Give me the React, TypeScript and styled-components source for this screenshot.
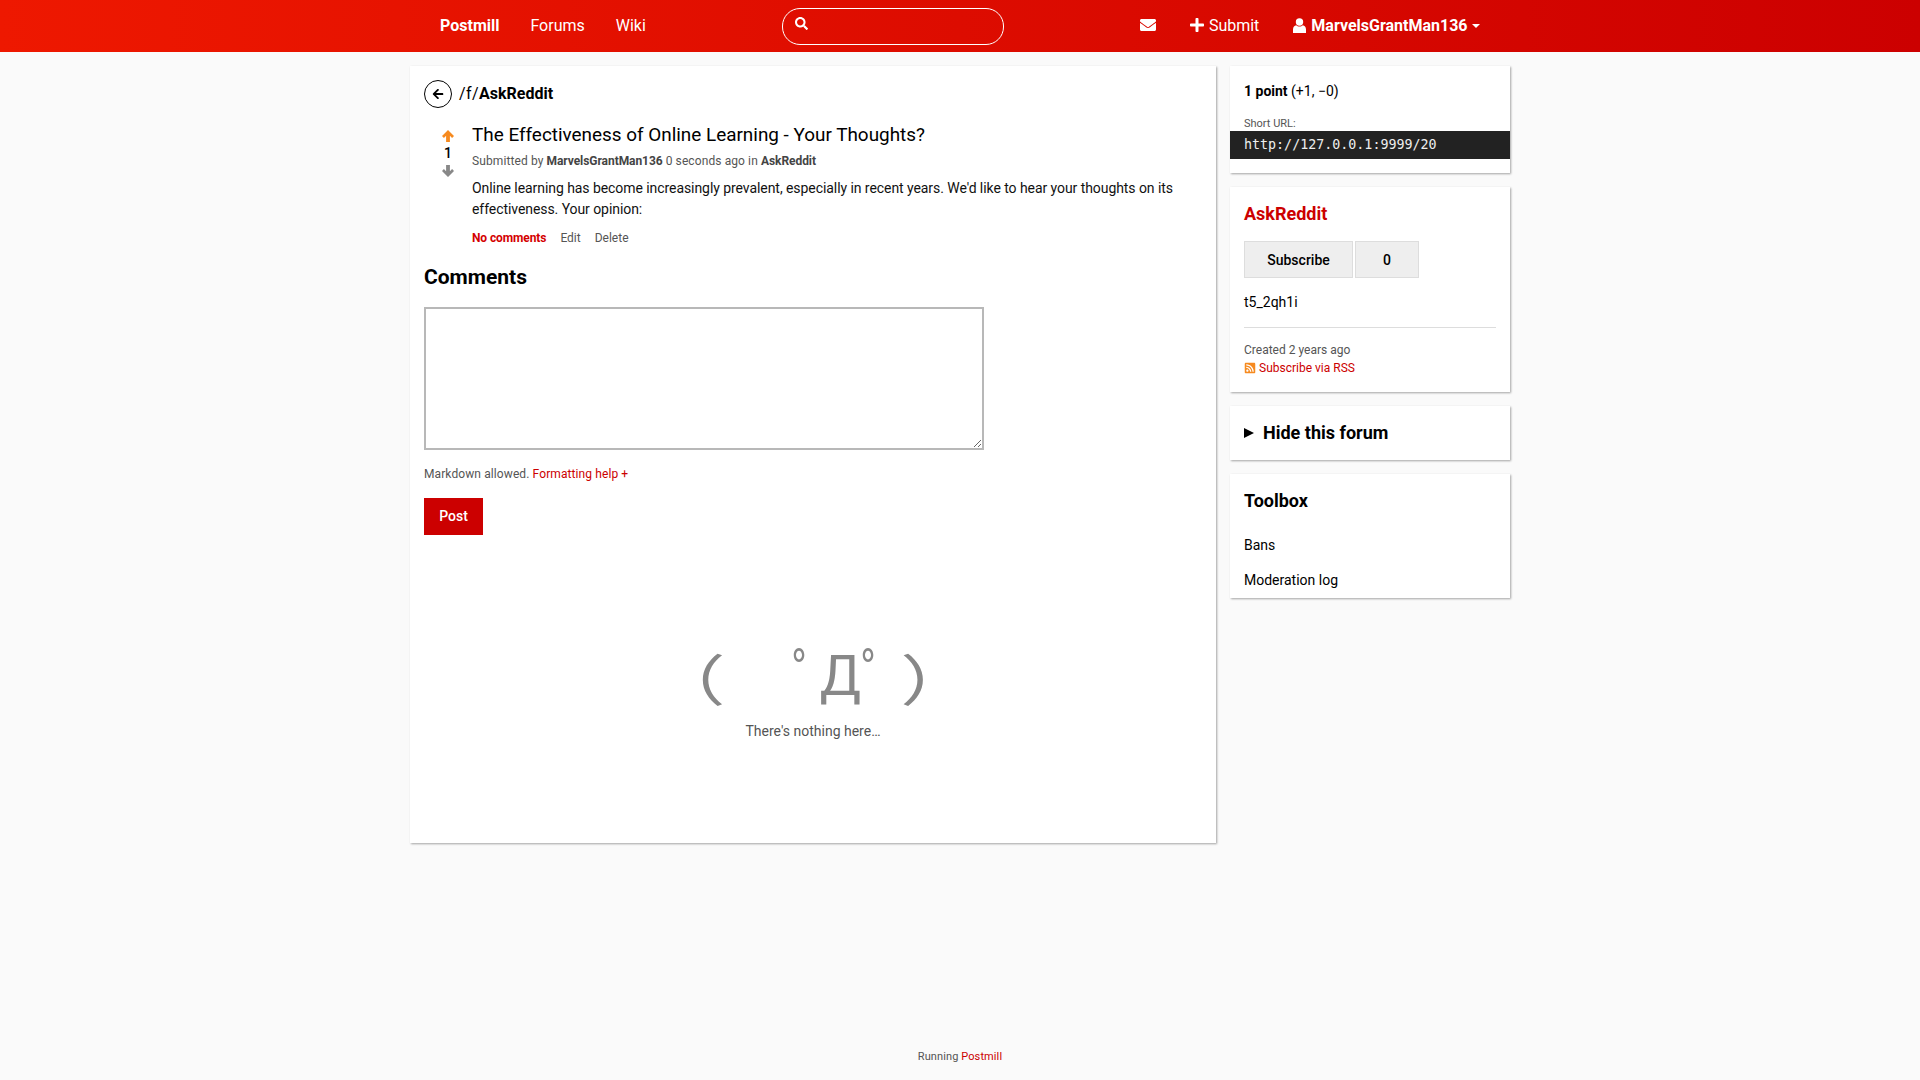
import React from "react";
import styled, { createGlobalStyle } from "styled-components";
import { FaEnvelope, FaPlus, FaSearch, FaRssSquare, FaArrowLeft } from "react-icons/fa";

const Global = createGlobalStyle`
  html, body { margin: 0; padding: 0; background: #fafafa; }
  body { font-family: Roboto, "Liberation Sans", sans-serif; font-size: 14px; color: #000; }
  * { box-sizing: border-box; }
`;

const Page = styled.div`
  min-height: 1080px;
  display: flex;
  flex-direction: column;
`;
const Nav = styled.nav`
  height: 52px;
  background: linear-gradient(to right, #ee1800, #cc0000);
  color: #fff;
  display: flex;
  justify-content: center;
`;
const NavInner = styled.div`
  width: 1100px;
  display: flex;
  align-items: center;
  padding-left: 30px;
  font-size: 16px;
`;
const NavLink = styled.span<{ $bold?: boolean; $gap: number }>`
  font-weight: ${(p) => (p.$bold ? 700 : 400)};
  margin-right: ${(p) => p.$gap}px;
  display: inline-flex;
  align-items: center;
  gap: 4px;
  margin-top: -2px;
`;
const SearchBox = styled.div`
  width: 222px;
  height: 37px;
  border: 1px solid #fff;
  border-radius: 18px;
  padding: 8px 12px;
  margin-right: 136px;
  margin-top: 1px;
  display: flex;
  align-items: flex-start;
  font-size: 13px;
`;
const Caret = styled.span`
  width: 0;
  height: 0;
  border-left: 4px solid transparent;
  border-right: 4px solid transparent;
  border-top: 4px solid #fff;
  margin-top: 2px;
`;
const UserIcon = styled.svg`
  width: 13px;
  height: 15px;
  display: block;
  fill: #fff;
  margin-right: 1px;
`;
const Layout = styled.div`
  width: 1100px;
  margin: 14px auto 0;
  display: flex;
  align-items: flex-start;
  gap: 14px;
`;
const Card = styled.section`
  background: #fff;
  box-shadow: 1px 1px 2px rgba(0, 0, 0, 0.35);
`;
const Main = styled(Card)`
  width: 806px;
  height: 777px;
  padding: 14px;
  display: flex;
  flex-direction: column;
`;
const Breadcrumb = styled.div`
  display: flex;
  align-items: center;
  gap: 7px;
  font-size: 16px;
  height: 28px;
  line-height: 26px;
`;
const Prefix = styled.span`
  letter-spacing: 0.4px;
`;
const BackCircle = styled.span`
  width: 28px;
  height: 28px;
  border: 1px solid #000;
  border-radius: 50%;
  display: inline-flex;
  align-items: center;
  justify-content: center;
  font-size: 12px;
`;
const Bold = styled.b`
  font-weight: 700;
`;
const Post = styled.article`
  display: flex;
  margin-top: 14px;
  padding-left: 17px;
`;
const Votes = styled.div`
  width: 14px;
  margin-right: 17px;
  margin-top: 8px;
  display: flex;
  flex-direction: column;
  align-items: center;
  font-size: 14px;
  line-height: 23px;
  font-weight: 500;
`;
const VoteIcon = styled.svg<{ $color: string; $flip?: boolean }>`
  width: 12px;
  height: 12px;
  display: block;
  fill: ${(p) => p.$color};
  transform: ${(p) => (p.$flip ? "scaleY(-1)" : "none")};
`;
const PostBody = styled.div`
  flex: 1;
`;
const Title = styled.h1`
  font-size: 18.9px;
  font-weight: 400;
  line-height: 26px;
  margin: 0;
`;
const Meta = styled.div`
  font-size: 12px;
  line-height: 18px;
  letter-spacing: 0.1px;
  color: #555;
  margin-top: 4px;
`;
const MetaStrong = styled.b`
  font-weight: 700;
  letter-spacing: -0.06px;
  color: #444;
`;
const BodyText = styled.p`
  font-size: 14px;
  letter-spacing: -0.065px;
  line-height: 21px;
  margin: 8px 0 0;
  width: 710px;
  color: #111;
`;
const Actions = styled.div`
  display: flex;
  gap: 14px;
  font-size: 12px;
  line-height: 18px;
  color: #555;
  margin-top: 9px;
`;
const RedBold = styled.span`
  color: #d40000;
  font-weight: 700;
  letter-spacing: -0.1px;
`;
const Heading = styled.h2`
  font-size: 21px;
  font-weight: 700;
  line-height: 28px;
  margin: 16px 0 0;
`;
const Area = styled.textarea`
  display: block;
  width: 560px;
  height: 143px;
  margin-top: 16px;
  border: 2px solid #b8b8b8;
  background: #fff;
  outline: none;
`;
const Hint = styled.div`
  font-size: 12px;
  line-height: 18px;
  letter-spacing: 0.1px;
  color: #555;
  margin-top: 15px;
`;
const Red = styled.span`
  color: #cc0000;
`;
const PostButton = styled.button`
  width: 59px;
  height: 37px;
  margin-top: 15px;
  padding: 0 0 2px;
  border: 0;
  background: #cc0000;
  color: #fff;
  font: 500 14px Roboto, sans-serif;
`;
const Empty = styled.div`
  margin-top: 109px;
  display: flex;
  flex-direction: column;
  align-items: center;
`;
const Kaomoji = styled.div`
  font-family: Roboto, "Noto Sans CJK JP", sans-serif;
  font-size: 55px;
  line-height: 64px;
  height: 60px;
  color: #888;
  white-space: pre;
`;
const Paren = styled.span<{ $open?: boolean }>`
  display: inline-block;
  transform: translateY(5px) scaleX(1.35);
  margin: ${(p) => (p.$open ? "0 21px 0 0" : "0 0 0 21px")};
`;
const EmptyText = styled.div`
  font-size: 14px;
  line-height: 21px;
  color: #555;
  margin-top: 17px;
`;
const Side = styled.aside`
  width: 280px;
  display: flex;
  flex-direction: column;
  gap: 14px;
`;
const SideCard = styled(Card)<{ $pad?: string }>`
  padding: ${(p) => p.$pad ?? "14px"};
`;
const Points = styled.div`
  line-height: 20px;
`;
const Small = styled.div`
  font-size: 11px;
  line-height: 14px;
  color: #555;
  margin-top: 16px;
`;
const Code = styled.div`
  background: #222;
  color: #eee;
  font-family: "DejaVu Sans Mono", monospace;
  font-size: 13.33px;
  line-height: 27px;
  height: 28px;
  padding: 0 14px;
  margin: 0 -14px;
`;
const Forum = styled.h2`
  margin: 0;
  color: #cc0000;
  font-size: 18px;
  line-height: 26px;
  font-weight: 700;
`;
const SubRow = styled.div`
  display: flex;
  gap: 2px;
  margin-top: 14px;
`;
const SubBtn = styled.div<{ $w: number }>`
  width: ${(p) => p.$w}px;
  height: 37px;
  background: #eee;
  border: 1px solid #ddd;
  display: flex;
  align-items: center;
  justify-content: center;
  font-weight: 500;
`;
const Divider = styled.hr`
  border: 0;
  border-top: 1px solid #ddd;
  margin: 14px 0 13px;
`;
const MetaLine = styled.div`
  font-size: 12px;
  line-height: 18px;
  color: #555;
  display: flex;
  align-items: center;
  gap: 3px;
`;
const Rss = styled(FaRssSquare)`
  color: #f68a1f;
  font-size: 12px;
`;
const HideRow = styled.div`
  display: flex;
  align-items: center;
  gap: 9px;
  font-size: 18px;
  font-weight: 700;
  line-height: 26px;
`;
const Triangle = styled.span`
  width: 0;
  height: 0;
  border-top: 5.5px solid transparent;
  border-bottom: 5.5px solid transparent;
  border-left: 10px solid #000;
`;
const ToolTitle = styled.h2`
  margin: 0 0 14px;
  font-size: 18px;
  line-height: 26px;
  font-weight: 700;
`;
const ToolItem = styled.div`
  font-size: 14px;
  line-height: 21px;
  padding: 7px 0;
`;
const Tag = styled.div`
  font-size: 14px;
  line-height: 21px;
  margin-top: 14px;
`;
const Footer = styled.footer`
  margin-top: auto;
  padding-bottom: 14px;
  text-align: center;
  font-size: 11px;
  letter-spacing: 0.1px;
  line-height: 18px;
  color: #555;
`;

const arrow = "M12 1 L23 12 L19.5 15.5 L15.5 11.5 V23 H8.5 V11.5 L4.5 15.5 L1 12 Z";

export default function App() {
  return (
    <Page>
      <Global />
      <Nav>
        <NavInner>
          <NavLink $bold $gap={31}>Postmill</NavLink>
          <NavLink $gap={31}>Forums</NavLink>
          <NavLink $gap={136}>Wiki</NavLink>
          <SearchBox><FaSearch /></SearchBox>
          <NavLink $gap={33}><FaEnvelope /></NavLink>
          <NavLink $gap={34}><FaPlus />Submit</NavLink>
          <NavLink $bold $gap={0}>
            <UserIcon viewBox="0 0 13 15">
              <circle cx="6.5" cy="4" r="3.7" />
              <path d="M0 15 V11.5 C0 9 1.5 7.5 3.2 7.2 C4 8 5.2 8.5 6.5 8.5 C7.8 8.5 9 8 9.8 7.2 C11.5 7.5 13 9 13 11.5 V15 Z" />
            </UserIcon>
            MarvelsGrantMan136<Caret />
          </NavLink>
        </NavInner>
      </Nav>
      <Layout>
        <Main as="main">
          <Breadcrumb>
            <BackCircle><FaArrowLeft /></BackCircle>
            <span><Prefix>/f/</Prefix><Bold>AskReddit</Bold></span>
          </Breadcrumb>
          <Post>
            <Votes>
              <VoteIcon $color="#f68a1f" viewBox="1 1 22 22"><path d={arrow} /></VoteIcon>
              1
              <VoteIcon $color="#888" $flip viewBox="1 1 22 22"><path d={arrow} /></VoteIcon>
            </Votes>
            <PostBody>
              <Title>The Effectiveness of Online Learning - Your Thoughts?</Title>
              <Meta>Submitted by <MetaStrong>MarvelsGrantMan136</MetaStrong> 0 seconds ago in <MetaStrong>AskReddit</MetaStrong></Meta>
              <BodyText>Online learning has become increasingly prevalent, especially in recent years. We'd like to hear your thoughts on its effectiveness. Your opinion:</BodyText>
              <Actions>
                <RedBold>No comments</RedBold>
                <span>Edit</span>
                <span>Delete</span>
              </Actions>
            </PostBody>
          </Post>
          <Heading>Comments</Heading>
          <Area />
          <Hint>Markdown allowed. <Red>Formatting help +</Red></Hint>
          <div><PostButton>Post</PostButton></div>
          <Empty>
            <Kaomoji><Paren $open>（</Paren>　ﾟДﾟ<Paren>）</Paren></Kaomoji>
            <EmptyText>There's nothing here…</EmptyText>
          </Empty>
        </Main>
        <Side>
          <SideCard $pad="15px 14px 14px">
            <Points><Bold>1 point</Bold> (+1, −0)</Points>
            <Small>Short URL:</Small>
            <Code>http://127.0.0.1:9999/20</Code>
          </SideCard>
          <SideCard $pad="14px 14px 15px">
            <Forum>AskReddit</Forum>
            <SubRow>
              <SubBtn $w={109}>Subscribe</SubBtn>
              <SubBtn $w={64}>0</SubBtn>
            </SubRow>
            <Tag>t5_2qh1i</Tag>
            <Divider />
            <MetaLine>Created 2 years ago</MetaLine>
            <MetaLine><Rss /><Red>Subscribe via RSS</Red></MetaLine>
          </SideCard>
          <SideCard>
            <HideRow><Triangle />Hide this forum</HideRow>
          </SideCard>
          <SideCard $pad="14px 14px 0">
            <ToolTitle>Toolbox</ToolTitle>
            <ToolItem>Bans</ToolItem>
            <ToolItem>Moderation log</ToolItem>
          </SideCard>
        </Side>
      </Layout>
      <Footer>Running <Red>Postmill</Red></Footer>
    </Page>
  );
}
